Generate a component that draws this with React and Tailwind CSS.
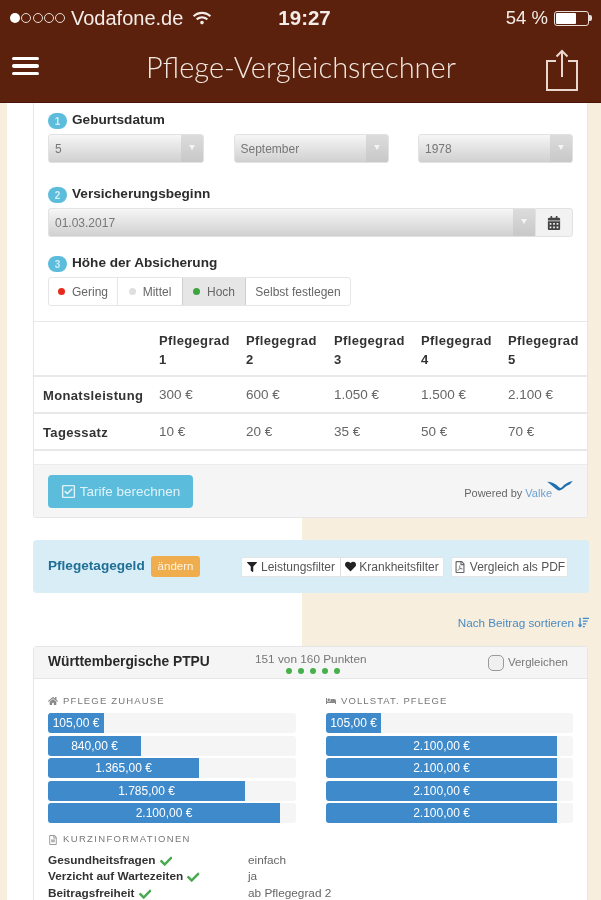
import React from "react";
import { FaFilter, FaHeart, FaRegFilePdf, FaCalendarAlt, FaRegCheckSquare, FaHome, FaBed, FaCheck, FaSortAmountDown, FaRegFileAlt, FaWifi } from "react-icons/fa";

const Num = ({ n, children }) => (
  <div className="flex items-center gap-[5px] h-4">
    <span className="w-[19px] h-4 rounded-full bg-[#5bbcdc] text-[#cfeef7] text-[10px] font-bold flex items-center justify-center">{n}</span>
    <span className="text-[13.6px] font-bold text-[#2c2c2c] pb-[2px]">{children}</span>
  </div>
);

const Arrow = () => (
  <span className="w-[22px] h-full bg-gradient-to-b from-[#dcdcdc] to-[#c8c8c8] flex items-center justify-center">
    <span className="w-0 h-0 mb-[3px] border-x-[3.5px] border-x-transparent border-t-[5px] border-t-[#f4f4f4]" />
  </span>
);

const Select = ({ children, className }) => (
  <div className={`h-[29px] flex rounded-[3px] overflow-hidden border border-[#e2e2e2] bg-gradient-to-b from-[#f6f6f6] to-[#d0d0d0] ${className}`}>
    <span className="flex-1 pl-[6px] text-[12px] leading-[28px] text-[#777]">{children}</span>
    <Arrow />
  </div>
);

const Seg = ({ dot, children, className }) => (
  <div className={`h-full flex items-center justify-center gap-[7px] text-[12px] text-[#666] ${className}`}>
    {dot && <span className={`w-[7px] h-[7px] rounded-full ${dot}`} />}
    {children}
  </div>
);

const Bar = ({ w, children }) => (
  <div className="h-5 mb-[2.5px] rounded-[3px] bg-[#f5f5f5] overflow-hidden">
    <div className="h-full bg-[#3f8acb] text-white text-[12px] leading-5 text-center" style={{ width: w }}>{children}</div>
  </div>
);

const Cap = ({ icon, children, className }) => (
  <div className={`flex items-center gap-[5px] h-3 text-[9.5px] text-[#777] font-medium ${className}`}>
    {icon}
    <span>{children}</span>
  </div>
);

const Dots = () => (
  <div className="flex gap-[6px] justify-center mt-[3px] pl-[4px]">
    {[0, 1, 2, 3, 4].map((i) => <span key={i} className="w-[6px] h-[6px] rounded-full bg-[#46b04a]" />)}
  </div>
);

const Row = ({ label, value }) => (
  <div className="flex h-[16.5px] items-center text-[11.8px]">
    <div className="w-[200px] font-bold text-[#333] flex items-center gap-[4px]">
      {label}
      <FaCheck className="text-[#4aa84e] text-[12.5px]" />
    </div>
    <div className="text-[#666]">{value}</div>
  </div>
);

const th = "pl-[9px] pt-[9px] align-top text-left font-bold text-[13px] leading-[19px] text-[#333] tracking-[0.35px]";
const td = "pl-[9px] pt-[3px] text-[13.5px] text-[#666] border-t-2 border-[#e8e8e8] h-[37px]";
const rh = "pl-[9px] pt-[3px] text-[13px] font-bold text-[#333] border-t-2 border-[#e8e8e8] h-[37px] tracking-[0.35px]";

export default function App() {
  return (
    <div className="w-[601px] h-[900px] overflow-hidden blur-[0.6px] font-['Liberation_Sans',Arial,sans-serif] bg-[linear-gradient(90deg,#f7eedd_7px,#ffffff_7px,#ffffff_302px,#f7eedd_302px)]">
      <header className="h-[103px] bg-[#5c210c] border-b border-[#4a1208] text-white">
        <div className="h-[36px] flex items-center pl-[10px] pr-[9px] text-[#f3ece8]">
          <div className="flex items-center gap-[1.25px]">
            <span className="w-[10px] h-[10px] rounded-full bg-white" />
            {[0, 1, 2, 3].map((i) => <span key={i} className="w-[10px] h-[10px] rounded-full border border-[#e8ddd8]" />)}
          </div>
          <span className="ml-[6px] text-[20px]">Vodafone.de</span>
          <FaWifi className="ml-[10px] text-[18px]" />
          <span className="ml-[67px] text-[20.5px] font-bold">19:27</span>
          <span className="ml-auto text-[18.5px]">54 %</span>
          <div className="ml-[6px] w-[35px] h-[15px] border border-[#e8ddd8] rounded-[3px] flex p-[1px]">
            <div className="w-[20px] bg-white rounded-[1px]" />
          </div>
          <span className="w-[3px] h-[6px] bg-[#e8ddd8] rounded-r-[2px]" />
        </div>
        <div className="h-[66px] flex items-center pl-[12px] pr-[23px] pb-[6px]">
          <div className="w-[27px] flex flex-col gap-[4px]">
            <span className="h-[3.5px] rounded-full bg-white" />
            <span className="h-[3.5px] rounded-full bg-white" />
            <span className="h-[3.5px] rounded-full bg-white" />
          </div>
          <h1 className="flex-1 text-center text-[#f1e8e2] font-['Lato',sans-serif] font-light text-[29px] leading-none ml-[17px]">Pflege-Vergleichsrechner</h1>
          <svg width="32" height="42" viewBox="0 0 32 42" fill="none" stroke="#ead8d0" strokeWidth="2" className="mt-[7px]">
            <path d="M10 12H1v29h30V12h-9" />
            <path d="M16 28V2M10.5 7.5L16 2l5.5 5.5" />
          </svg>
        </div>
      </header>

      <div className="ml-[33px] w-[555px] h-[415px] bg-white border-x border-b border-[#e6e6e6] rounded-b-[3px] flex flex-col">
        <div className="px-[14px] pt-[10px] h-[218px]">
          <Num n="1">Geburtsdatum</Num>
          <div className="flex justify-between mt-[5px]">
            <Select className="w-[156px]">5</Select>
            <Select className="w-[155px]">September</Select>
            <Select className="w-[155px]">1978</Select>
          </div>
          <div className="mt-[24px]"><Num n="2">Versicherungsbeginn</Num></div>
          <div className="flex mt-[5px] h-[29px]">
            <Select className="flex-1 rounded-r-none border-r-0">01.03.2017</Select>
            <div className="w-[38px] bg-[#f2f2f2] border border-[#e2e2e2] rounded-r-[3px] flex items-center justify-center">
              <FaCalendarAlt className="text-[#444] text-[14px]" />
            </div>
          </div>
          <div className="mt-[19px]"><Num n="3">Höhe der Absicherung</Num></div>
          <div className="flex mt-[5px] h-[29px] w-[303px] border border-[#e6e6e6] rounded-[3px]">
            <Seg dot="bg-[#e8291c]" className="w-[69px] border-r border-[#e6e6e6]">Gering</Seg>
            <Seg dot="bg-[#dfdfdf]" className="w-[64px]">Mittel</Seg>
            <Seg dot="bg-[#3da53f]" className="w-[64px] bg-[#e6e6e6] border-x border-[#cfcfcf]">Hoch</Seg>
            <Seg className="flex-1">Selbst festlegen</Seg>
          </div>
        </div>

        <table className="table-fixed w-[553px] border-collapse border-t border-b-2 border-[#e8e8e8]">
          <colgroup>
            <col className="w-[116px]" /><col className="w-[87px]" /><col className="w-[88px]" /><col className="w-[87px]" /><col className="w-[87px]" /><col className="w-[88px]" />
          </colgroup>
          <tbody>
            <tr className="h-[54px]">
              <th className={th}></th>
              {[1, 2, 3, 4, 5].map((n) => <th key={n} className={th}>Pflegegrad<br />{n}</th>)}
            </tr>
            <tr>
              <td className={rh}>Monatsleistung</td>
              {["300 €", "600 €", "1.050 €", "1.500 €", "2.100 €"].map((v) => <td key={v} className={td}>{v}</td>)}
            </tr>
            <tr>
              <td className={rh}>Tagessatz</td>
              {["10 €", "20 €", "35 €", "50 €", "70 €"].map((v) => <td key={v} className={td}>{v}</td>)}
            </tr>
          </tbody>
        </table>

        <div className="flex-1 mt-[13px] bg-[#f5f5f5] border-t border-[#ececec] flex items-center justify-between pl-[14px] pr-[13px] pt-[2px]">
          <div className="w-[145px] h-[33px] rounded-[4px] bg-[#5bbcdc] text-[#dff3f9] text-[13.5px] flex items-center justify-center gap-[4px]">
            <FaRegCheckSquare className="text-[15px]" />
            Tarife berechnen
          </div>
          <div className="flex items-center text-[11px] text-[#666] relative pt-[2px]">
            Powered by <span className="text-[#6c9fd0] ml-[3px] mr-[22px]">Valke</span>
            <svg width="28" height="11" viewBox="0 0 28 12" className="absolute right-0 top-[-3px]" fill="#1f6fae">
              <path d="M0 2c4 0 9 2 13 6 1 1 2 1 3 0 3-4 7-6 12-7-2 2-3 4-6 5-3 2-5 4-7 5-2 1-3 0-5-1C7 8 4 5 0 2z" />
            </svg>
          </div>
        </div>
      </div>

      <div className="ml-[33px] mt-[22px] w-[556px] h-[53px] bg-[#d9edf7] rounded-[4px] flex items-center pl-[15px]">
        <span className="w-[96px] whitespace-nowrap text-[13.6px] font-bold text-[#206f95]">Pflegetagegeld</span>
        <span className="ml-[7px] w-[49px] h-[21px] rounded-[3px] bg-[#f0ad4e] text-[#fdf3e0] text-[11.5px] flex items-center justify-center">ändern</span>
        <div className="ml-[41px] h-[20px] w-[203px] flex bg-white rounded-[2px] border border-[#e4e4e4] text-[12px] text-[#555] whitespace-nowrap">
          <div className="w-[99px] flex items-center justify-center gap-[4px] border-r border-[#e0e0e0]"><FaFilter className="text-[#222] text-[10px] shrink-0" />Leistungsfilter</div>
          <div className="flex-1 flex items-center justify-center gap-[3px]"><FaHeart className="text-[#222] text-[11px] shrink-0" />Krankheitsfilter</div>
        </div>
        <div className="ml-[7px] h-[20px] w-[117px] flex items-center justify-center gap-[4px] bg-white rounded-[2px] border border-[#e4e4e4] text-[12px] text-[#555] whitespace-nowrap">
          <FaRegFilePdf className="text-[#666] text-[12px] shrink-0" />Vergleich als PDF
        </div>
      </div>

      <div className="ml-[33px] w-[556px] h-[53px] pt-[6px] flex items-center justify-end gap-[4px] text-[11.7px] text-[#4a8bc2]">
        Nach Beitrag sortieren
        <FaSortAmountDown className="text-[11px] text-[#3f8acb]" />
      </div>

      <div className="ml-[33px] w-[555px] bg-white border-x border-t border-[#e6e6e6] rounded-t-[4px]">
        <div className="h-[32px] bg-[#f5f5f5] border-b border-[#e6e6e6] pl-[14px] pr-[19px] flex items-center">
          <span className="w-[207px] whitespace-nowrap text-[13.8px] font-bold text-[#2a2a2a]">Württembergische PTPU</span>
          <div className="w-[112px] pt-[2px]">
            <div className="text-[11.8px] leading-3 text-[#777] whitespace-nowrap">151 von 160 Punkten</div>
            <Dots />
          </div>
          <div className="ml-auto flex items-center gap-[4px]">
            <span className="w-[16px] h-[16px] rounded-[5px] border border-[#999] bg-[#f0f0f0]" />
            <span className="text-[11.5px] text-[#777]">Vergleichen</span>
          </div>
        </div>

        <div className="px-[14px] pt-[16px]">
          <div className="grid grid-cols-[248px_247px] gap-x-[30px]">
            <div>
              <Cap className="tracking-[1.15px]" icon={<FaHome className="text-[10px] text-[#888]" />}>PFLEGE ZUHAUSE</Cap>
              <div className="mt-[6px]">
                <Bar w="56px">105,00 €</Bar>
                <Bar w="93px">840,00 €</Bar>
                <Bar w="151px">1.365,00 €</Bar>
                <Bar w="197px">1.785,00 €</Bar>
                <Bar w="232px">2.100,00 €</Bar>
              </div>
            </div>
            <div>
              <Cap className="tracking-[1.1px]" icon={<FaBed className="text-[10px] text-[#888]" />}>VOLLSTAT. PFLEGE</Cap>
              <div className="mt-[6px]">
                <Bar w="55px">105,00 €</Bar>
                <Bar w="231px">2.100,00 €</Bar>
                <Bar w="231px">2.100,00 €</Bar>
                <Bar w="231px">2.100,00 €</Bar>
                <Bar w="231px">2.100,00 €</Bar>
              </div>
            </div>
          </div>
          <div className="mt-[8px]">
            <Cap className="tracking-[1.35px]" icon={<FaRegFileAlt className="text-[10px] text-[#999]" />}>KURZINFORMATIONEN</Cap>
          </div>
          <div className="mt-[7px]">
            <Row label="Gesundheitsfragen" value="einfach" />
            <Row label="Verzicht auf Wartezeiten" value="ja" />
            <Row label="Beitragsfreiheit" value="ab Pflegegrad 2" />
          </div>
        </div>
      </div>
    </div>
  );
}
